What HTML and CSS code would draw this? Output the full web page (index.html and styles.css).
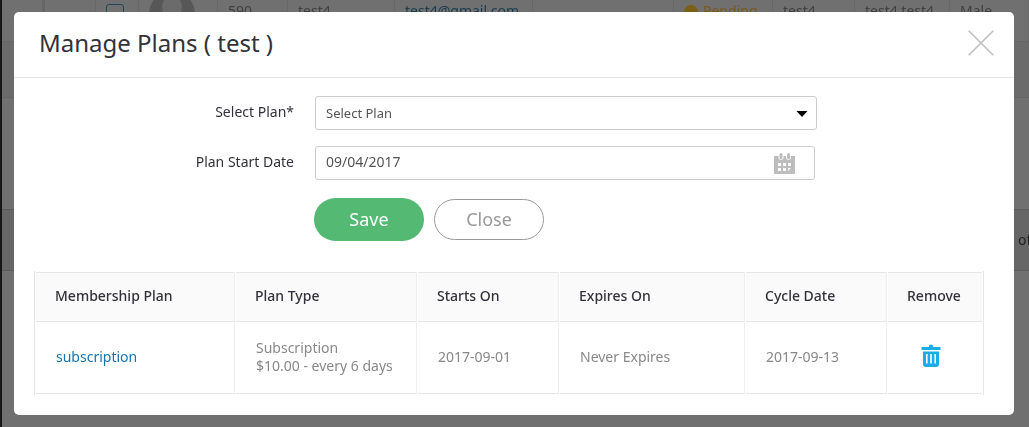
FILE: index.html
```html
<!DOCTYPE html>
<html lang="en">
<head>
<meta charset="utf-8">
<meta name="viewport" content="width=device-width, initial-scale=1">
<title>Manage Plans</title>
<link rel="stylesheet" href="styles.css">
</head>
<body>
<div class="page" aria-hidden="true">
  <div class="member-row">
    <span class="cell cell-edge"></span>
    <span class="cell cell-blank"></span>
    <span class="cell cell-check"><input class="check" type="checkbox" aria-label="Select test4" tabindex="-1"></span>
    <span class="cell cell-avatar">
      <svg width="46" height="46" viewBox="0 0 46 46"><circle cx="23" cy="23" r="23" fill="#575757"/><ellipse cx="23" cy="16" rx="10" ry="12" fill="#6b6b6b"/></svg>
    </span>
    <span class="cell cell-id">590</span>
    <span class="cell cell-user">test4</span>
    <span class="cell cell-mail">test4@gmail.com</span>
    <span class="cell cell-plan"></span>
    <span class="cell cell-status"><span class="dot"></span>Pending</span>
    <span class="cell cell-first">test4</span>
    <span class="cell cell-name">test4 test4</span>
    <span class="cell cell-last">Male</span>
  </div>
  <div class="band band-alt"></div>
  <div class="band band-plain"></div>
  <div class="band band-pager">of</div>
</div>

<main class="modal" role="dialog" aria-labelledby="modal-title">
  <header class="modal-head">
    <h1 class="modal-title" id="modal-title">Manage Plans ( test )</h1>
    <button class="dismiss" type="button" aria-label="Dismiss">
      <svg width="26" height="26" viewBox="0 0 26 26"><path d="M.7.7 25.3 25.3M25.3.7.7 25.3" fill="none" stroke="#bdbdbd" stroke-width="1.5"/></svg>
    </button>
  </header>
  <form class="plan-form">
    <label class="label" for="plan">Select Plan*</label>
    <div class="select-wrap">
      <select class="field field-select" id="plan"><option>Select Plan</option></select>
      <svg class="arrow" width="12" height="6" viewBox="0 0 12 6"><path d="M.5 0h11L6 6z"/></svg>
    </div>
    <label class="label" for="start">Plan Start Date</label>
    <div class="date-wrap">
      <input class="field field-date" id="start" type="text" value="09/04/2017">
      <svg class="calendar" width="22" height="22" viewBox="0 0 22 22">
        <path d="M0 3h21v18H0z" fill="#bdbdbd"/>
        <path d="M4.500 1h5v4.500q-2.500 2.500-5 0zM12 1h5v4.500q-2.500 2.500-5 0z" fill="#fff"/>
        <rect x="5.500" y="0" width="3" height="6" rx="1.5" fill="#bdbdbd"/><rect x="13" y="0" width="3" height="6" rx="1.5" fill="#bdbdbd"/>
        <path d="M4 10h3v3H4zm5 0h3v3H9zm5 0h3v3h-3zM4 15h3v3H4zm5 0h3v3H9zm5 0h3l-3 3z" fill="#fff"/>
      </svg>
    </div>
    <div class="actions">
      <button class="btn btn-save" type="button">Save</button>
      <button class="btn btn-close" type="button">Close</button>
    </div>
  </form>
  <div class="plans-wrap">
    <table class="plans">
      <colgroup><col class="col-plan"><col class="col-type"><col class="col-date"><col class="col-expiry"><col class="col-date"><col class="col-remove"></colgroup>
      <thead>
        <tr><th>Membership Plan</th><th>Plan Type</th><th>Starts On</th><th>Expires On</th><th>Cycle Date</th><th>Remove</th></tr>
      </thead>
      <tbody>
        <tr>
          <td><a class="plan-link" href="#">subscription</a></td>
          <td>Subscription<br>$10.00 - every 6 days</td>
          <td>2017-09-01</td>
          <td>Never Expires</td>
          <td>2017-09-13</td>
          <td>
            <button class="remove" type="button" aria-label="Remove subscription">
              <svg width="20" height="24" viewBox="0 0 20 24">
                <path d="M.5 3H8V2Q8 .5 10 .5T12 2v1h7.500v3H.5z" fill="#16ade9"/>
                <path d="M2 7.500h16V20q0 3-3 3H5q-3 0-3-3z" fill="#16ade9"/>
                <path d="M5.800 10v9.500M10 10v9.500M14.200 10v9.500" stroke="#fff" stroke-width="1.600"/>
              </svg>
            </button>
          </td>
        </tr>
      </tbody>
    </table>
  </div>
</main>
</body>
</html>
```

FILE: styles.css
```css
* { box-sizing: border-box; }

body {
  margin: 0;
  padding: 12px 15px 12px 14px;
  background: #707070;
  color: #32323a;
  font-family: "Noto Sans", "Open Sans", sans-serif;
  font-size: 14px;
}

/* Dimmed member list behind the dialog */
.page {
  position: fixed;
  inset: 0;
  overflow: hidden;
  border-left: 2px solid #17171a;
  color: #404040;
}

.member-row {
  display: flex;
  height: 41px;
}

.cell {
  flex: none;
  padding-left: 10px;
  border-right: 1px solid #686868;
  line-height: 22px;
  white-space: nowrap;
}

.cell-edge { width: 43px; border-right: 3px solid #666; }
.cell-blank { width: 51px; }
.cell-check { width: 43px; padding-top: 4px; }
.cell-avatar { width: 79px; }
.cell-id { width: 70px; }
.cell-user { width: 107px; }
.cell-mail { width: 138px; color: #173c50; }
.cell-plan { width: 141px; }
.cell-status { width: 99px; color: #79591b; }
.cell-first { width: 82px; }
.cell-name { width: 95px; }
.cell-last { flex: 1; }

.cell-avatar svg { display: block; margin-top: -9px; }

.check {
  display: block;
  width: 18px;
  height: 18px;
  margin: 0;
  appearance: none;
  border: 1px solid #1c4a58;
  border-radius: 3px;
}

.dot {
  display: inline-block;
  width: 14px;
  height: 14px;
  margin-right: 5px;
  border-radius: 50%;
  background: #796014;
  vertical-align: -3px;
}

.band-alt { height: 57px; border: solid #666; border-width: 1px 0; background: #6b6b6b; }
.band-plain { height: 111px; }
.band-pager {
  height: 62px;
  padding: 20px 0 0 1016px;
  border: solid #5c5c5c;
  border-width: 1px 0;
  background: #666;
  color: #222;
  line-height: 20px;
}

/* Dialog */
.modal {
  position: relative;
  padding-bottom: 20px;
  border-radius: 5px;
  background: #fff;
}

.modal-head {
  display: flex;
  align-items: center;
  justify-content: space-between;
  height: 66px;
  padding: 0 20px 4px 25px;
  border-bottom: 1px solid #e6e6e6;
}

.modal-title {
  margin: 0;
  font-size: 24px;
  font-weight: 400;
}

.dismiss, .remove {
  display: block;
  padding: 0;
  border: 0;
  background: none;
}

.dismiss svg, .remove svg { display: block; }

.plan-form {
  display: grid;
  grid-template-columns: 28% 1fr 20%;
  gap: 16px 20px;
  padding-top: 18px;
}

.label {
  grid-column: 1;
  line-height: 32px;
  text-align: right;
}

.select-wrap, .date-wrap {
  position: relative;
  grid-column: 2;
  margin: 0 -23px 0 1px;
}

.date-wrap { margin-right: -21px; }

.field {
  display: block;
  width: 100%;
  height: 34px;
  margin: 0;
  padding: 0 10px;
  appearance: none;
  border: 1px solid #ccc;
  border-radius: 3px;
  background: #fff;
  color: #555;
  font: 13px "Noto Sans", "Open Sans", sans-serif;
}

.field-date { padding-bottom: 3px; font-size: 14px; }

.arrow {
  position: absolute;
  top: 15px;
  right: 9px;
  pointer-events: none;
}

.calendar {
  position: absolute;
  top: 7px;
  right: 19px;
  pointer-events: none;
}

.actions {
  display: flex;
  grid-column: 2;
  gap: 10px;
  align-items: center;
  padding-top: 2px;
}

.btn {
  width: 110px;
  height: 43px;
  padding: 0 0 2px;
  border: 0;
  border-radius: 22px;
  font: 18px "Noto Sans", "Open Sans", sans-serif;
}

.btn-save { background: #54b973; color: #fff; }
.btn-close { height: 41px; border: 1px solid #999; background: #fff; color: #999; }

/* Plans table */
.plans-wrap { padding: 30px 30px 0 20px; }

.plans {
  width: 100%;
  table-layout: fixed;
  border: solid #e6e6e6;
  border-width: 0 1px;
  border-spacing: 1px;
}

.col-plan { width: 199px; }
.col-type { width: 181px; }
.col-date { width: 141px; }
.col-expiry { width: 185px; }
.col-remove { width: 94px; }

.plans th, .plans td {
  padding: 0 0 2px 19px;
  border-right: 1px solid #efefef;
  border-bottom: 1px solid #e6e6e6;
  line-height: 18px;
  text-align: left;
}

.plans th {
  height: 50px;
  border-top: 1px solid #e6e6e6;
  background: #fafafa;
  font-weight: 500;
}

.plans td {
  height: 71px;
  padding-left: 20px;
  color: #888;
}

.plans td:last-child { padding-bottom: 4px; }

.plans th:last-child, .plans td:last-child { border-right: 0; }

.plan-link { color: #1673ad; text-decoration: none; }

.remove { margin-left: 13px; }
```
